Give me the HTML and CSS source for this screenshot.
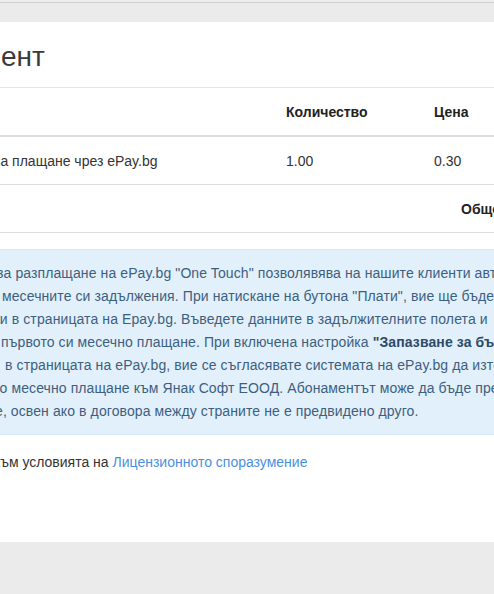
FILE: index.html
```html
<!DOCTYPE html>
<html lang="bg">
<head>
<meta charset="utf-8">
<title>Абонамент</title>
<link rel="stylesheet" href="styles.css">
</head>
<body>
<div class="viewport">
  <div class="top-strip"></div>
  <div class="top-bar"></div>
  <div class="card">
    <div class="card-head">
      <h1 class="title"><span class="frag frag-title">ент</span></h1>
    </div>
    <table class="items">
      <colgroup>
        <col class="c-desc">
        <col class="c-qty">
        <col class="c-price">
      </colgroup>
      <thead>
        <tr>
          <th></th>
          <th>Количество</th>
          <th>Цена</th>
        </tr>
      </thead>
      <tbody>
        <tr>
          <td class="desc"><span class="frag frag-desc">за плащане чрез ePay.bg</span></td>
          <td>1.00</td>
          <td>0.30</td>
        </tr>
        <tr>
          <td></td>
          <td></td>
          <td class="total-label">Общо:</td>
        </tr>
      </tbody>
    </table>
    <div class="alert">
      <div class="line"><span class="frag f1">за разплащане на ePay.bg "One Touch" позволявява на нашите клиенти автоматично да заплащат</span></div>
      <div class="line"><span class="frag f2">месечните си задължения. При натискане на бутона "Плати", вие ще бъдете пренасочен</span></div>
      <div class="line"><span class="frag f3">ни в страницата на Epay.bg. Въведете данните в задължителните полета и</span></div>
      <div class="line"><span class="frag f4">първото си месечно плащане. При включена настройка <strong>"Запазване за бъдещи плащания"</strong></span></div>
      <div class="line"><span class="frag f5">в страницата на ePay.bg, вие се съгласявате системата на ePay.bg да изтегля автоматично</span></div>
      <div class="line"><span class="frag f6">всяко месечно плащане към Янак Софт ЕООД. Абонаментът може да бъде прекратен по всяко</span></div>
      <div class="line"><span class="frag f7">е, освен ако в договора между страните не е предвидено друго.</span></div>
    </div>
    <p class="terms"><span class="frag f8">към условията на <a href="#">Лицензионното споразумение</a></span></p>
  </div>
</div>
</body>
</html>
```

FILE: styles.css
```css
html, body {
  margin: 0;
  padding: 0;
}
body {
  width: 494px;
  height: 594px;
  overflow: hidden;
  background: #ebebeb;
  font-family: "Liberation Sans", Arial, sans-serif;
  font-size: 14px;
  color: #333;
}
.viewport {
  width: 494px;
  overflow: hidden;
}
.top-strip {
  height: 2px;
  background: #eeeeee;
}
.top-bar {
  height: 19px;
  border-top: 1px solid #cfcfcf;
  background: #ebebeb;
}
.card {
  width: 700px;
  height: 520px;
  background: #fff;
  overflow: hidden;
}
.frag {
  display: inline-block;
  white-space: nowrap;
}
.card-head {
  height: 65px;
  border-bottom: 1px solid #e5e5e5;
  display: flex;
  align-items: center;
}
.title {
  margin: 0;
  font-size: 28px;
  font-weight: normal;
  color: #3a3a3a;
  line-height: 32px;
  padding-top: 4px;
}
.frag-title {
  margin-left: 1px;
}
.items {
  border-collapse: collapse;
  table-layout: fixed;
  width: 700px;
}
.c-desc { width: 278px; }
.c-qty { width: 148px; }
.c-price { width: 274px; }
.items th,
.items td {
  padding: 0 8px;
  text-align: left;
  white-space: nowrap;
}
.items th {
  height: 47px;
  font-weight: bold;
  color: #222;
  border-bottom: 2px solid #dddddd;
  vertical-align: middle;
}
.items td {
  height: 47px;
  border-bottom: 1px solid #dddddd;
  vertical-align: middle;
  color: #333;
}
.items td.desc {
  padding-left: 0;
}
.frag-desc {
  margin-left: -6px;
}
.items td.total-label {
  padding-left: 35px;
  font-weight: bold;
  color: #222;
}
.alert {
  margin-top: 16px;
  background: #e2f0fb;
  border-top: 1px solid #d3e7f6;
  border-bottom: 1px solid #d3e7f6;
  padding: 12px 0 11px 0;
  color: #3d5f7f;
  line-height: 23px;
  letter-spacing: 0.1px;
}
.alert strong {
  color: #2e4a66;
}
.line {
  white-space: nowrap;
  height: 23px;
}
.f1 { margin-left: -3px; }
.f2 { margin-left: 2px; }
.f3 { margin-left: -8px; }
.f4 { margin-left: 1px; }
.f5 { margin-left: 5px; }
.f6 { margin-left: -29px; }
.f7 { margin-left: -5px; }
.f8 { margin-left: -6px; }
.terms {
  margin: 17px 0 0 0;
  line-height: 20px;
  color: #333;
}
.terms a {
  color: #4a90e2;
  text-decoration: none;
}
```
